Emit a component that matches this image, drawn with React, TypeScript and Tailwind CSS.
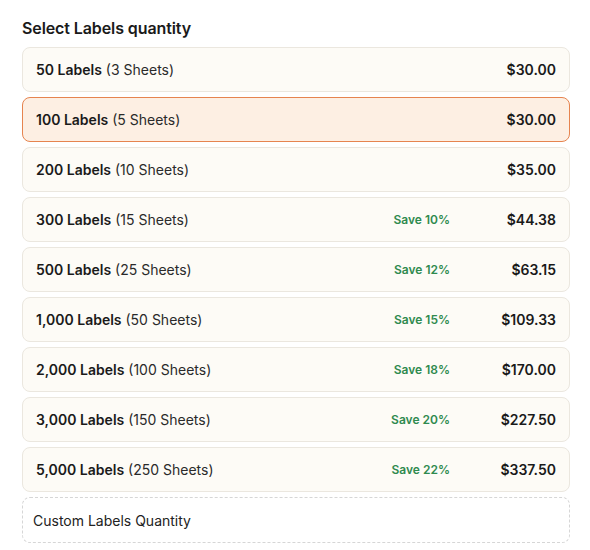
import React from "react";

type Option = {
  labels: string;
  sheets: string;
  save?: string;
  price: string;
};

const OPTIONS: Option[] = [
  { labels: "50", sheets: "3", price: "$30.00" },
  { labels: "100", sheets: "5", price: "$30.00" },
  { labels: "200", sheets: "10", price: "$35.00" },
  { labels: "300", sheets: "15", save: "Save 10%", price: "$44.38" },
  { labels: "500", sheets: "25", save: "Save 12%", price: "$63.15" },
  { labels: "1,000", sheets: "50", save: "Save 15%", price: "$109.33" },
  { labels: "2,000", sheets: "100", save: "Save 18%", price: "$170.00" },
  { labels: "3,000", sheets: "150", save: "Save 20%", price: "$227.50" },
  { labels: "5,000", sheets: "250", save: "Save 22%", price: "$337.50" },
];

const SELECTED = 1;

export default function App() {
  return (
    <div className="min-h-screen w-[590px] bg-white pl-[22px] pr-[20px] pt-[18px] font-['Inter','Liberation_Sans',sans-serif] text-[#1a1a1a]">
      <h2 className="mb-[9px] text-[16px] font-semibold leading-5 tracking-[-0.1px]">
        Select Labels quantity
      </h2>
      <div className="flex flex-col gap-[5px]">
        {OPTIONS.map((o, i) => {
          const active = i === SELECTED;
          return (
            <div
              key={o.labels}
              className={
                active
                  ? "flex h-[45px] items-center rounded-[8px] border border-[#e6844f] bg-[#fdefe3] pl-[13px] pr-[13px] text-[14px]"
                  : "flex h-[45px] items-center rounded-[8px] border border-[#ebe7df] bg-[#fdfbf6] pl-[13px] pr-[13px] text-[14px]"
              }
            >
              <span className="flex-1">
                <span className="font-semibold">{o.labels} Labels</span>{" "}
                <span className="text-[#2a2a2a]">({o.sheets} Sheets)</span>
              </span>
              {o.save ? (
                <span className="text-[12px] font-semibold text-[#2f8a4f]">
                  {o.save}
                </span>
              ) : null}
              <span className="w-[106px] text-right text-[14px] font-semibold">
                {o.price}
              </span>
            </div>
          );
        })}
        <div className="flex h-[46px] items-center rounded-[8px] border border-dashed border-[#d6d6d6] bg-white px-[10px] text-[14px] text-[#222]">
          Custom Labels Quantity
        </div>
      </div>
    </div>
  );
}
